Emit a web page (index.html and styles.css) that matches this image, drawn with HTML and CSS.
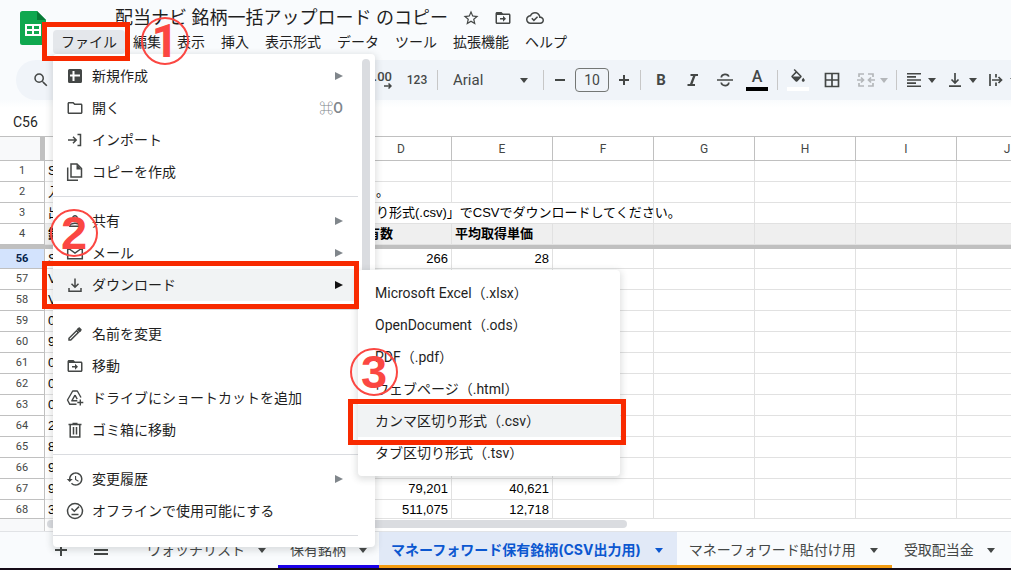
FILE: index.html
```html
<!DOCTYPE html>
<html lang="ja">
<head>
<meta charset="utf-8">
<title>配当ナビ 銘柄一括アップロード のコピー</title>
<link rel="stylesheet" href="styles.css">
</head>
<body>
<svg class="defs" aria-hidden="true">
  <symbol id="move" viewBox="0 0 24 24"><path d="M20 6h-8l-2-2H4c-1.100 0-2 .9-2 2v12c0 1.100.9 2 2 2h16c1.100 0 2-.9 2-2V8c0-1.100-.9-2-2-2zm0 12H4V8h16v10z"/><path d="M12 17l4-4-4-4v3H8v2h4z"/></symbol>
</svg>
<div class="app">
  <header class="header">
    <svg class="logo" viewBox="0 0 26 34"><path fill="#0fa84f" d="M2.500 0H17l9 9v22.500a2.500 2.500 0 0 1-2.500 2.500h-21A2.500 2.500 0 0 1 0 31.500v-29A2.500 2.500 0 0 1 2.500 0z"/><path fill="#087a36" d="M17 0l9 9h-9z"/><path fill="none" stroke="#fff" stroke-width="2" d="M6 14h14v10H6zM6 19h14M13 14v10"/></svg>
    <div class="heading">
      <div class="title-row">
        <h1 class="title">配当ナビ 銘柄一括アップロード のコピー</h1>
        <button class="title-btn" aria-label="スター"><svg class="ico" viewBox="0 0 24 24"><path d="M22 9.240l-7.190-.62L12 2 9.190 8.630 2 9.240l5.460 4.730L5.820 21 12 17.270 18.180 21l-1.630-7.030L22 9.240zM12 15.400l-3.760 2.270 1-4.280-3.320-2.880 4.380-.38L12 6.100l1.710 4.040 4.380.38-3.320 2.880 1 4.280L12 15.400z"/></svg></button>
        <button class="title-btn" aria-label="移動"><svg class="ico"><use href="#move"/></svg></button>
        <button class="title-btn" aria-label="保存状態"><svg class="ico" viewBox="0 0 24 24"><path d="M19.350 10.040C18.670 6.590 15.640 4 12 4 9.110 4 6.600 5.640 5.350 8.040 2.340 8.360 0 10.910 0 14c0 3.310 2.690 6 6 6h13c2.760 0 5-2.240 5-5 0-2.640-2.050-4.780-4.650-4.960zM19 18H6c-2.210 0-4-1.790-4-4s1.790-4 4-4h.71C7.370 7.690 9.480 6 12 6c3.040 0 5.500 2.460 5.500 5.500v.5H19c1.660 0 3 1.340 3 3s-1.340 3-3 3z"/><path d="M10.500 16.500L7 13l1.400-1.400 2.100 2.100 4.200-4.200 1.400 1.400z"/></svg></button>
      </div>
      <nav class="menubar">
        <button class="menubar-item menubar-item--open">ファイル</button><button class="menubar-item">編集</button><button class="menubar-item">表示</button><button class="menubar-item">挿入</button><button class="menubar-item">表示形式</button><button class="menubar-item">データ</button><button class="menubar-item">ツール</button><button class="menubar-item">拡張機能</button><button class="menubar-item">ヘルプ</button>
      </nav>
    </div>
  </header>

  <div class="toolbar">
    <button class="tool tool--small" aria-label="検索"><svg class="ico" viewBox="0 0 24 24"><path d="M15.500 14h-.79l-.28-.27A6.470 6.470 0 0 0 16 9.500 6.500 6.500 0 1 0 9.500 16c1.610 0 3.090-.59 4.230-1.570l.27.28v.79l5 4.990L20.490 19l-4.990-5zm-6 0C7 14 5 12 5 9.500S7 5 9.500 5 14 7 14 9.500 12 14 9.500 14z"/></svg></button>
    <button class="tool tool--small tool--decimals" aria-label="小数点以下の桁数を増やす"><span>.00</span><svg class="arrow" viewBox="0 0 8 6"><path fill="none" stroke="currentColor" stroke-width="1.500" d="M0 3h7M4.500 .5L7 3 4.500 5.500"/></svg></button>
    <button class="tool tool--format">123</button>
    <span class="sep"></span>
    <label class="font-picker"><select class="font-select" aria-label="フォント"><option>Arial</option></select><i class="caret"></i></label>
    <span class="sep"></span>
    <button class="tool tool--small" aria-label="縮小"><svg class="ico" viewBox="0 0 18 18"><path d="M4 8h10v2H4z"/></svg></button>
    <input class="size" aria-label="フォントサイズ" value="10">
    <button class="tool tool--small" aria-label="拡大"><svg class="ico" viewBox="0 0 18 18"><path d="M4 8h10v2H4zM8 4h2v10H8z"/></svg></button>
    <span class="sep"></span>
    <button class="tool bold">B</button>
    <button class="tool" aria-label="斜体"><svg class="ico" viewBox="0 0 18 18"><path d="M6.500 3H14v2h-2.500l-3 8H11v2H3.500v-2H6l3-8H6.500z"/></svg></button>
    <button class="tool" aria-label="取り消し線"><svg class="ico" viewBox="0 0 18 18"><path fill="none" stroke="currentColor" stroke-width="1.700" d="M1 9h16M5.300 6.500C5.300 2.500 12 2.300 12.800 5.600M5.200 11.500c.6 4.200 7.800 3.900 7.600 0"/></svg></button>
    <button class="tool tool--color">A</button>
    <span class="sep"></span>
    <button class="tool tool--fill" aria-label="塗りつぶしの色"><svg class="ico" viewBox="0 0 24 24"><path d="M16.560 8.940L7.620 0 6.210 1.410l2.380 2.380-5.150 5.150c-.59.59-.59 1.540 0 2.120l5.500 5.500c.59.59 1.540.59 2.120 0l5.500-5.500c.59-.58.59-1.530 0-2.120zM5.210 10L10 5.210 14.790 10H5.210zM19 11.500s-2 2.170-2 3.500c0 1.100.9 2 2 2s2-.9 2-2c0-1.330-2-3.500-2-3.500z"/></svg></button>
    <button class="tool tool--borders" aria-label="枠線"><svg class="ico" viewBox="0 0 18 18"><path fill="none" stroke="currentColor" stroke-width="1.700" d="M2.500 2.500h13v13h-13zM9 2v14M2 9h14"/></svg></button>
    <button class="tool tool--drop tool--disabled" aria-label="セルを結合"><svg class="ico" viewBox="0 0 18 18"><path fill="none" stroke="currentColor" stroke-width="1.700" d="M7 3H2v3M11 3h5v3M2 12v3h5M16 12v3h-5M0 9h6M4 6.500L6.500 9 4 11.500M18 9h-6M14 6.500L11.500 9l2.500 2.500"/></svg><i class="caret"></i></button>
    <span class="sep"></span>
    <button class="tool tool--drop" aria-label="水平方向の配置"><svg class="ico" viewBox="0 0 18 18"><path d="M2 2h14v1.600H2zM2 5.100h9v1.600H2zM2 8.200h14v1.600H2zM2 11.300h9v1.600H2zM2 14.400h14V16H2z"/></svg><i class="caret"></i></button>
    <button class="tool tool--drop" aria-label="垂直方向の配置"><svg class="ico" viewBox="0 0 18 18"><path fill="none" stroke="currentColor" stroke-width="1.700" d="M3 15.200h12M9 2v9.500M5.500 8.500L9 12l3.500-3.500"/></svg><i class="caret"></i></button>
    <button class="tool tool--drop" aria-label="テキストの折り返し"><svg class="ico" viewBox="0 0 18 18"><path fill="none" stroke="currentColor" stroke-width="1.700" d="M3 3v12M9 3v3.500M9 11.500V15M5 9h9M11.500 6L14.500 9l-3 3"/></svg><i class="caret"></i></button>
  </div>

  <div class="namebar"><input class="namebox" aria-label="名前ボックス" value="C56"></div>

  <main class="sheet">
    <table class="grid">
      <colgroup><col class="c-num"><col class="c-a"><col class="c-a"><col class="c-a"><col class="c"><col class="c"><col class="c"><col class="c"><col class="c"><col class="c"><col class="c"></colgroup>
      <thead><tr><th class="corner"></th><th>A</th><th>B</th><th>C</th><th>D</th><th>E</th><th>F</th><th>G</th><th>H</th><th>I</th><th>J</th></tr></thead>
      <tbody>
        <tr><th>1</th><td>S</td><td></td><td></td><td></td><td></td><td></td><td></td><td></td><td></td><td></td></tr>
        <tr><th>2</th><td>入</td><td></td><td></td><td class="spill">。</td><td></td><td></td><td></td><td></td><td></td><td></td></tr>
        <tr><th>3</th><td>出</td><td></td><td></td><td class="spill" colspan="3">り形式(.csv)」でCSVでダウンロードしてください。</td><td></td><td></td><td></td><td></td></tr>
        <tr class="labels"><th>4</th><td>銘</td><td></td><td></td><td>保有数</td><td>平均取得単価</td><td></td><td></td><td></td><td></td><td></td></tr>
        <tr class="freeze"><td colspan="11"></td></tr>
        <tr class="current"><th>56</th><td>S</td><td></td><td></td><td class="n">266</td><td class="n">28</td><td></td><td></td><td></td><td></td><td></td></tr>
        <tr><th>57</th><td>V</td><td></td><td></td><td></td><td></td><td></td><td></td><td></td><td></td><td></td></tr>
        <tr><th>58</th><td>V</td><td></td><td></td><td></td><td></td><td></td><td></td><td></td><td></td><td></td></tr>
        <tr><th>59</th><td>0</td><td></td><td></td><td></td><td></td><td></td><td></td><td></td><td></td><td></td></tr>
        <tr><th>60</th><td>9</td><td></td><td></td><td></td><td></td><td></td><td></td><td></td><td></td><td></td></tr>
        <tr><th>61</th><td>0</td><td></td><td></td><td></td><td></td><td></td><td></td><td></td><td></td><td></td></tr>
        <tr><th>62</th><td>0</td><td></td><td></td><td></td><td></td><td></td><td></td><td></td><td></td><td></td></tr>
        <tr><th>63</th><td>0</td><td></td><td></td><td></td><td></td><td></td><td></td><td></td><td></td><td></td></tr>
        <tr><th>64</th><td>2</td><td></td><td></td><td></td><td></td><td></td><td></td><td></td><td></td><td></td></tr>
        <tr><th>65</th><td>8</td><td></td><td></td><td></td><td></td><td></td><td></td><td></td><td></td><td></td></tr>
        <tr><th>66</th><td>9</td><td></td><td></td><td></td><td></td><td></td><td></td><td></td><td></td><td></td></tr>
        <tr><th>67</th><td>9</td><td></td><td></td><td class="n">79,201</td><td class="n">40,621</td><td></td><td></td><td></td><td></td><td></td></tr>
        <tr class="last"><th>68</th><td>3</td><td></td><td></td><td class="n">511,075</td><td class="n">12,718</td><td></td><td></td><td></td><td></td><td></td></tr>
      </tbody>
    </table>
    <div class="hscroll"><div class="hscroll-gutter"></div><div class="hscroll-thumb"></div></div>
  </main>

  <footer class="tabs">
    <button class="tabs-btn" aria-label="シートを追加"><svg class="ico" viewBox="0 0 18 18"><path d="M3 8h12v2H3zM8 3h2v12H8z"/></svg></button>
    <button class="tabs-btn" aria-label="すべてのシート"><svg class="ico" viewBox="0 0 18 18"><path d="M2 4h14v2H2zM2 8h14v2H2zM2 12h14v2H2z"/></svg></button>
    <button class="tab tab--first">ウォッチリスト<i class="caret"></i></button>
    <button class="tab tab--blue">保有銘柄<i class="caret"></i></button>
    <button class="tab tab--orange tab--active">マネーフォワード保有銘柄(CSV出力用)<i class="caret"></i></button>
    <button class="tab tab--orange">マネーフォワード貼付け用<i class="caret"></i></button>
    <button class="tab">受取配当金<i class="caret"></i></button>
  </footer>

  <div class="popup file-menu" role="menu">
    <div class="file-list">
      <button class="item"><svg class="ico" viewBox="0 0 18 18"><path fill-rule="evenodd" d="M3.500 2h11A1.500 1.500 0 0 1 16 3.500v11a1.500 1.500 0 0 1-1.500 1.500h-11A1.500 1.500 0 0 1 2 14.500v-11A1.500 1.500 0 0 1 3.500 2zM6.500 4v3.500H4v2h2.500V14h2V9.500H14v-2H8.500V4z"/></svg>新規作成<i class="sub"></i></button>
      <button class="item"><svg class="ico" viewBox="0 0 24 24"><path d="M9.170 6l2 2H20v10H4V6h5.170M10 4H4c-1.100 0-2 .9-2 2v12c0 1.100.9 2 2 2h16c1.100 0 2-.9 2-2V8c0-1.100-.9-2-2-2h-8l-2-2z"/></svg>開く<span class="key">⌘O</span></button>
      <button class="item"><svg class="ico" viewBox="0 0 18 18"><path fill="none" stroke="currentColor" stroke-width="1.500" d="M2 9h8M7 5.800L10.200 9 7 12.200M11.500 3.500h3v11h-3"/></svg>インポート</button>
      <button class="item"><svg class="ico" viewBox="0 0 18 18"><path fill="none" stroke="currentColor" stroke-width="1.500" d="M5 1h6l4.500 4.500V14H5zM1.700 4.500v12.800H12"/><path d="M10.500 1v5.500h5z"/></svg>コピーを作成</button>
      <hr class="rule">
      <button class="item"><svg class="ico" viewBox="0 0 24 24"><path d="M12 12c2.210 0 4-1.790 4-4s-1.790-4-4-4-4 1.790-4 4 1.790 4 4 4zm0-6a2 2 0 1 1 0 4 2 2 0 0 1 0-4zm0 8c-2.670 0-8 1.340-8 4v2h16v-2c0-2.660-5.330-4-8-4zm-6 4c.22-.72 3.310-2 6-2 2.700 0 5.800 1.290 6 2H6z"/></svg>共有<i class="sub"></i></button>
      <button class="item"><svg class="ico" viewBox="0 0 18 18"><path fill="none" stroke="currentColor" stroke-width="1.500" d="M1.700 3.300h14.600v11.400H1.700zM2 4l7 5 7-5"/></svg>メール<i class="sub"></i></button>
      <button class="item item--on"><svg class="ico" viewBox="0 0 18 18"><path fill="none" stroke="currentColor" stroke-width="1.500" d="M9 2.500v8.300M5.500 7.700L9 11.200l3.500-3.500M3 12v3.200h12V12"/></svg>ダウンロード<i class="sub"></i></button>
      <hr class="rule">
      <button class="item"><svg class="ico" viewBox="0 0 24 24"><path d="M14.060 9.020l.92.92L5.920 19H5v-.92l9.060-9.060M17.660 3c-.25 0-.51.1-.7.29l-1.830 1.830 3.750 3.750 1.830-1.830c.39-.39.39-1.020 0-1.410l-2.340-2.340c-.2-.2-.45-.29-.71-.29zm-3.600 3.190L3 17.250V21h3.750L17.810 9.940l-3.750-3.750z"/><path d="M14 6l4 4 2.500-2.500-4-4z"/></svg>名前を変更</button>
      <button class="item"><svg class="ico"><use href="#move"/></svg>移動</button>
      <button class="item"><svg class="ico" viewBox="0 0 18 18"><path fill="none" stroke="currentColor" stroke-width="1.400" stroke-linejoin="round" d="M15 8.500L11.300 2H6.700L1.500 11l2.300 4.300h6.700M9 6.200L5.800 11.800h5.500M9 6.200l2.200 4M14.300 10.500v6M11.300 13.500h6"/></svg>ドライブにショートカットを追加</button>
      <button class="item"><svg class="ico" viewBox="0 0 18 18"><path fill="none" stroke="currentColor" stroke-width="1.500" d="M2.500 3.500h13M6.500 2.500h5M4.200 4v12h9.600V4M7.500 6v7.500M10.500 6v7.500"/></svg>ゴミ箱に移動</button>
      <hr class="rule">
      <button class="item"><svg class="ico" viewBox="0 0 24 24"><path d="M13 3c-4.970 0-9 4.030-9 9H1l3.900 4L9 12H6c0-3.870 3.130-7 7-7s7 3.130 7 7-3.130 7-7 7c-1.930 0-3.680-.79-4.940-2.060l-1.420 1.420C8.270 19.990 10.510 21 13 21c4.970 0 9-4.030 9-9s-4.030-9-9-9zm-1 5v5l4.280 2.540.72-1.210-3.500-2.080V8H12z"/></svg>変更履歴<i class="sub"></i></button>
      <button class="item"><svg class="ico" viewBox="0 0 18 18"><circle cx="9" cy="9" r="7.500" fill="none" stroke="currentColor" stroke-width="1.500"/><path fill="none" stroke="currentColor" stroke-width="1.500" d="M5.500 6.500L8.300 9.300l4.700-4.700M5.500 12.500h7"/></svg>オフラインで使用可能にする</button>
      <hr class="rule">
    </div>
    <div class="vscroll"></div>
  </div>

  <div class="popup download-menu" role="menu">
    <button class="item">Microsoft Excel（.xlsx）</button>
    <button class="item">OpenDocument（.ods）</button>
    <button class="item">PDF（.pdf）</button>
    <button class="item">ウェブページ（.html）</button>
    <button class="item item--on">カンマ区切り形式（.csv）</button>
    <button class="item">タブ区切り形式（.tsv）</button>
  </div>

  <div class="mark mark--file"></div>
  <div class="mark mark--download"></div>
  <div class="mark mark--csv"></div>
  <div class="step step--1">1</div>
  <div class="step step--2">2</div>
  <div class="step step--3">3</div>
</div>
</body>
</html>
```
FILE: styles.css
```css
* { box-sizing: border-box; }
body {
  margin: 0;
  background: #f9fbfd;
  color: #1f1f1f;
  font: 14px/20px Roboto, "Noto Sans CJK JP", sans-serif;
  overflow: hidden;
}
button, input, select {
  margin: 0;
  padding: 0;
  border: 0;
  background: none;
  color: inherit;
  font: inherit;
  white-space: nowrap;
}
.defs { position: absolute; width: 0; height: 0; }
.app { position: relative; display: flex; flex-direction: column; min-height: 100vh; }
.ico { display: block; flex: none; width: 18px; height: 18px; fill: currentColor; }
.caret {
  flex: none;
  border: 4px solid transparent;
  border-top: 5px solid currentColor;
  border-bottom: 0;
}

.header { display: flex; height: 60px; padding-left: 20px; }
.logo { flex: none; width: 26px; height: 34px; margin-top: 11px; }
.heading { padding-left: 7px; }
.title-row { display: flex; align-items: center; gap: 14px; height: 30px; padding: 5px 0 0 62px; color: #444746; }
.title { margin: 0; color: #1f1f1f; font-size: 18px; line-height: 24px; font-weight: 400; white-space: nowrap; }
.title-btn { display: block; }
.menubar { display: flex; }
.menubar-item { height: 24px; padding: 0 8px; }
.menubar-item--open { background: #e4e7eb; border-radius: 4px; }

.toolbar {
  display: flex;
  align-items: center;
  height: 40px;
  margin-left: 16px;
  padding-left: 13px;
  border-radius: 20px 0 0 20px;
  background: #f0f4f9;
  color: #444746;
  overflow: hidden;
}
.tool { display: flex; flex: none; align-items: center; justify-content: center; width: 32px; height: 30px; }
.tool--small { width: 24px; }
.tool--decimals { flex-direction: column; align-items: flex-end; margin-left: 319px; padding-right: 4px; font-size: 13px; font-weight: 500; line-height: 12px; }
.arrow { width: 8px; height: 6px; }
.tool--format { margin-left: 5px; font-size: 12px; font-weight: 500; }
.sep { flex: none; width: 1px; height: 20px; margin: 0 4px; background: #c7c7c7; }
.font-picker { display: flex; flex: none; align-items: center; width: 97px; padding: 0 11px; }
.font-select { flex: 1; appearance: none; outline: 0; font-size: 15px; }
.size { flex: none; width: 34px; height: 24px; margin: 0 3px; border: 1px solid #747775; border-radius: 4px; text-align: center; }
.bold { font-size: 15px; font-weight: 700; }
.tool--color { height: 22px; border: solid transparent; border-width: 0 5px; font-size: 16px; font-weight: 500; line-height: 16px; align-items: flex-start; background: linear-gradient(#000, #000) bottom / 100% 4px no-repeat; }
.tool--fill { height: 22px; border: solid transparent; border-width: 0 5px; align-items: flex-start; background: linear-gradient(#fff, #fff) bottom / 100% 4px no-repeat; }
.tool--borders { width: 36px; margin-right: 3px; }
.tool--drop { justify-content: flex-start; gap: 5px; width: 39px; margin-right: 2px; padding: 0 4px; }
.tool--disabled { margin-right: 0; color: #b4b7ba; }

.namebar { height: 36px; padding: 12px 13px 0; background: linear-gradient(#f9fbfd, #fff 8px); }
.namebox { display: block; width: 80px; height: 20px; }

.sheet { background: #fff; overflow: hidden; }
.grid {
  width: 1058px;
  border-collapse: separate;
  border-spacing: 0;
  border-top: 1px solid #c0c0c0;
  table-layout: fixed;
  font: 13px/18px "Liberation Sans", "Noto Sans CJK JP", sans-serif;
  color: #000;
}
.c-num { width: 45px; }
.c-a { width: 102px; }
.c { width: 101px; }
.grid th { height: 21px; padding: 0; border: solid #c0c0c0; border-width: 0 1px 1px 0; color: #444746; font: 11px/18px Roboto, sans-serif; }
.grid thead th { height: 24px; font-size: 12px; }
.grid td { height: 21px; padding: 0 3px; border: solid #e1e1e1; border-width: 0 1px 1px 0; white-space: nowrap; }
.grid .corner { border-right: 5px solid #c0c0c0; background: #f8f9fa; }
.grid .n { text-align: right; }
.grid .spill { padding-left: 25px; }
.grid .labels td { background: #efefef; font-weight: 700; }
.grid .freeze td { height: 4px; padding: 0; border: 0; background: #c0c0c0; }
.grid .current td, .grid .current th { height: 20px; }
.grid .current th { background: #d3e3fd; color: #041e49; font-weight: 700; }
.grid .last td, .grid .last th { height: 19px; padding-top: 2px; line-height: 16px; }
.hscroll { display: flex; height: 12px; }
.hscroll-gutter { width: 45px; border-right: 1px solid #d0d0d0; background: #f8f9fa; }
.hscroll-thumb { width: 580px; height: 8px; margin: 1px 0 0 2px; border-radius: 4px; background: #dadce0; }

.tabs {
  display: flex;
  flex: 1;
  padding-left: 41px;
  border-top: 1px solid #e1e3e6;
  border-bottom: 2px solid #160c18;
  background: #f9fbfd;
  color: #444746;
  font-family: Inter, "Noto Sans CJK JP", sans-serif;
  overflow: hidden;
}
.tabs-btn { display: flex; flex: none; align-items: center; justify-content: center; width: 40px; }
.tab { display: flex; flex: none; align-items: center; gap: 13px; padding: 3px 12px 0; border-bottom: 3px solid transparent; }
.tab--first { margin-left: 14px; }
.tab--blue { border-color: #1a00e8; }
.tab--orange { gap: 14px; padding-right: 14px; border-color: #f39c12; }
.tab--active { background-color: #e1e9f7; color: #0b57d0; font-weight: 700; }

.popup { position: absolute; background: #fff; border-radius: 4px; box-shadow: 0 2px 6px 2px rgba(60, 64, 67, .15); }
.file-menu { left: 53px; top: 54px; display: flex; width: 322px; height: 493px; overflow: hidden; }
.file-list { flex: 1; padding: 6px 0; }
.vscroll { width: 8px; height: 400px; margin: 5px 5px 0 4px; border-radius: 4px; background: #dadce0; }
.download-menu { left: 358px; top: 270px; width: 262px; padding: 7px 0; }
.item { display: flex; align-items: center; gap: 8px; width: 100%; height: 32px; padding: 0 15px 0 13px; text-align: left; }
.item .ico { color: #444746; }
.item--on { background: #f1f3f4; }
.download-menu .item { padding-left: 17px; }
.sub { margin-left: auto; border: 4px solid transparent; border-left: 8px solid #80868b; border-right: 0; }
.item--on .sub { border-left-color: #111; }
.key { margin-left: auto; color: #80868b; font-weight: 500; }
.rule { height: 1px; margin: 8px 0; border: 0; background: #dadce0; }

.mark { position: absolute; border: 5px solid #f82a00; }
.mark--file { left: 42px; top: 22px; width: 88px; height: 39px; }
.mark--download { left: 42px; top: 261px; width: 317px; height: 48px; }
.mark--csv { left: 348px; top: 399px; width: 278px; height: 46px; }
.step {
  position: absolute;
  width: 48px;
  height: 48px;
  border: 2px solid #fb4742;
  border-radius: 50%;
  color: #fb4742;
  font: 700 47px/44px "Liberation Sans", sans-serif;
  text-align: center;
}
.step--1 { left: 141px; top: 17px; font-family: Roboto, sans-serif; }
.step--2 { left: 50px; top: 209px; }
.step--3 { left: 350px; top: 348px; }
```
